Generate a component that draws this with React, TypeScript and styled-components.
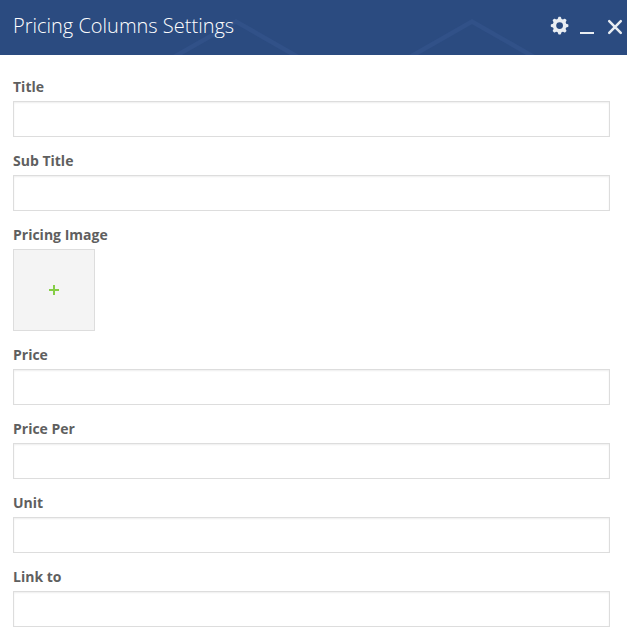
import React from "react";
import styled, { createGlobalStyle } from "styled-components";

const GlobalStyle = createGlobalStyle`
  *, *::before, *::after { box-sizing: border-box; }
  body {
    margin: 0;
    background: #fff;
    font-family: "Open Sans", sans-serif;
    overflow: hidden;
  }
`;

const Panel = styled.section`
  width: 627px;
  height: 635px;
  overflow: hidden;
  background: #fff;
`;

const Header = styled.header`
  position: relative;
  display: flex;
  align-items: center;
  justify-content: space-between;
  height: 55px;
  padding: 0 3px 3px 13px;
  background: #2b4b80;
`;

const Pattern = styled.svg`
  position: absolute;
  inset: 0;
`;

const Heading = styled.h1`
  position: relative;
  margin: 0;
  font-size: 20px;
  font-weight: 300;
  line-height: 28px;
  color: #fff;
  white-space: nowrap;
`;

const Actions = styled.div`
  position: relative;
  display: flex;
  align-items: center;
  gap: 10px;
`;

const ActionButton = styled.button`
  display: block;
  width: 18px;
  height: 18px;
  padding: 0;
  border: 0;
  background: none;
  cursor: pointer;

  svg { display: block; overflow: visible; }
`;

const Form = styled.form`
  display: flex;
  flex-direction: column;
  gap: 14px;
  padding: 22px 17px 8px 13px;
`;

const Field = styled.div`
  display: flex;
  flex-direction: column;
  gap: 4px;
`;

const Label = styled.label`
  font-size: 14px;
  font-weight: 700;
  line-height: 20px;
  color: #5f5f5f;
`;

const Input = styled.input`
  width: 100%;
  height: 36px;
  padding: 0 10px;
  border: 1px solid #ddd;
  border-radius: 0;
  background: #fff;
  box-shadow: inset 0 1px 2px rgba(0, 0, 0, 0.07);
  font: 14px "Open Sans", sans-serif;
  color: #595959;
  outline: none;
`;

const ImagePicker = styled.button`
  display: grid;
  place-items: center;
  width: 82px;
  height: 82px;
  padding: 0;
  border: 1px solid #ddd;
  background: #f4f4f4;
  cursor: pointer;
`;

type FieldSpec = { id: string; label: string; kind: "text" | "image" };

const fields: FieldSpec[] = [
  { id: "title", label: "Title", kind: "text" },
  { id: "subtitle", label: "Sub Title", kind: "text" },
  { id: "image", label: "Pricing Image", kind: "image" },
  { id: "price", label: "Price", kind: "text" },
  { id: "per", label: "Price Per", kind: "text" },
  { id: "unit", label: "Unit", kind: "text" },
  { id: "link", label: "Link to", kind: "text" },
];

const teeth = [0, 45, 90, 135, 180, 225, 270, 315];

const GearIcon = () => (
  <svg width="18" height="18" viewBox="-0.6 0.4 18 18" fill="#e9edf2">
    {teeth.map((angle) => (
      <path key={angle} d="M6.6 4 7.6 0.8Q7.8 0.2 8.3 0.2H9.7Q10.2 0.2 10.4 0.8L11.4 4Z" transform={`rotate(${angle} 9 9)`} />
    ))}
    <circle cx="9" cy="9" r="5.1" fill="none" stroke="#e9edf2" strokeWidth="3.4" />
  </svg>
);

const MinimizeIcon = () => (
  <svg width="18" height="18" viewBox="0 0 18 18">
    <rect x="2" y="15" width="14" height="2" fill="#e9edf2" />
  </svg>
);

const CloseIcon = () => (
  <svg width="18" height="18" viewBox="0 0 18 18">
    <path d="M3.2 4.2 14.8 15.8M14.8 4.2 3.2 15.8" stroke="#e9edf2" strokeWidth="2.5" strokeLinecap="round" />
  </svg>
);

const PlusIcon = () => (
  <svg width="10" height="10" viewBox="0 0 10 10" fill="#85cd45">
    <path d="M4 0h2v4h4v2H6v4H4V6H0V4h4z" />
  </svg>
);

export default function App() {
  return (
    <>
      <GlobalStyle />
      <Panel>
        <Header>
          <Pattern width="627" height="55" viewBox="0 0 627 55" fill="none" stroke="#315188" strokeWidth="4.5" aria-hidden="true">
            <path d="M174 57 236 21.5 298 57M410 57 472 21.5 534 57" />
          </Pattern>
          <Heading>Pricing Columns Settings</Heading>
          <Actions>
            <ActionButton aria-label="Settings"><GearIcon /></ActionButton>
            <ActionButton aria-label="Minimize"><MinimizeIcon /></ActionButton>
            <ActionButton aria-label="Close"><CloseIcon /></ActionButton>
          </Actions>
        </Header>
        <Form>
          {fields.map(({ id, label, kind }) => (
            <Field key={id}>
              <Label htmlFor={id}>{label}</Label>
              {kind === "text" ? (
                <Input id={id} type="text" />
              ) : (
                <ImagePicker id={id} type="button" aria-label="Add image"><PlusIcon /></ImagePicker>
              )}
            </Field>
          ))}
        </Form>
      </Panel>
    </>
  );
}
